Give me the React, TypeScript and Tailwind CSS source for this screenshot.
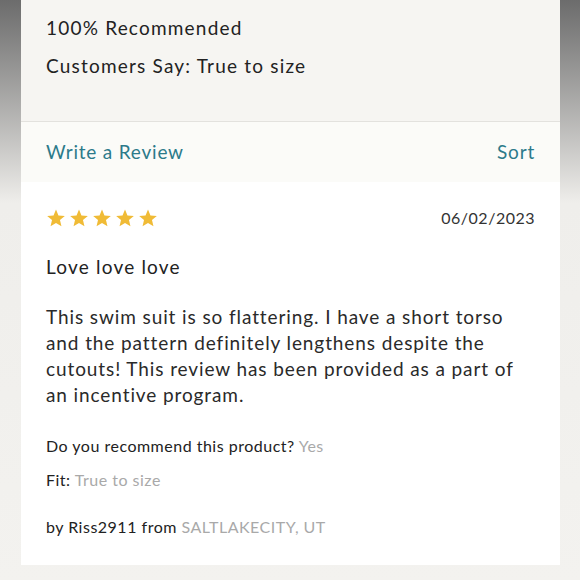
// Review summary panel — single product review card

const font = { fontFamily: "Lato, 'Noto Sans', sans-serif" };

function Star() {
  return (
    <svg viewBox="0 0 24 24" className="h-[20px] w-[20px]" fill="#f0bb36">
      <path d="M12 1.8l2.95 7.06 7.63.62-5.8 4.98 1.77 7.44L12 17.9l-6.55 4L7.22 14.46 1.42 9.48l7.63-.62z" />
    </svg>
  );
}

export default function App() {
  const stars = [0, 1, 2, 3, 4];

  return (
    <div
      className="min-h-[580px] w-[580px] bg-linear-to-b from-[#6c6c6c] via-[#efeeeb] via-35% to-[#f3f2ef] text-[#222]"
      style={font}
    >
      <div className="mx-[21px] w-[539px] flex flex-col">
        {/* Summary */}
        <div className="h-[122px] bg-[#f6f5f2] border-b border-[#e3e2de] px-[25px] pt-[15px] flex flex-col gap-[12px] text-[19px] leading-[26px] tracking-[1.2px]">
          <div>100% Recommended</div>
          <div>Customers Say: True to size</div>
        </div>

        {/* Actions */}
        <div className="h-[60px] bg-[#fbfbf8] px-[25px] flex items-center justify-between text-[19px] text-[#2c7a8a] tracking-[0.8px]">
          <span>Write a Review</span>
          <span>Sort</span>
        </div>

        {/* Review */}
        <div className="bg-white px-[25px] pt-[24px] pb-[27px]">
          <div className="flex items-center justify-between">
            <div className="flex gap-[3px]">
              {stars.map((s) => (
                <Star key={s} />
              ))}
            </div>
            <span className="text-[16px] tracking-[0.5px] text-[#333]">06/02/2023</span>
          </div>

          <div className="mt-[24px] text-[19px] leading-[26px] tracking-[1.2px]">Love love love</div>

          <p className="mt-[24px] text-[19px] leading-[26px] tracking-[0.9px] text-[#2a2a2a]">
            This swim suit is so flattering. I have a short torso and the pattern definitely lengthens despite the
            cutouts! This review has been provided as a part of an incentive program.
          </p>

          <div className="mt-[27px] text-[16px] leading-[22px] tracking-[0.5px]">
            Do you recommend this product? <span className="text-[#a9a9a9]">Yes</span>
          </div>
          <div className="mt-[12px] text-[16px] leading-[22px] tracking-[0.5px]">
            Fit: <span className="text-[#a9a9a9]">True to size</span>
          </div>
          <div className="mt-[25px] text-[16px] leading-[22px] tracking-[0.5px]">
            by Riss2911 from <span className="text-[#a9a9a9]">SALTLAKECITY, UT</span>
          </div>
        </div>
      </div>
    </div>
  );
}
